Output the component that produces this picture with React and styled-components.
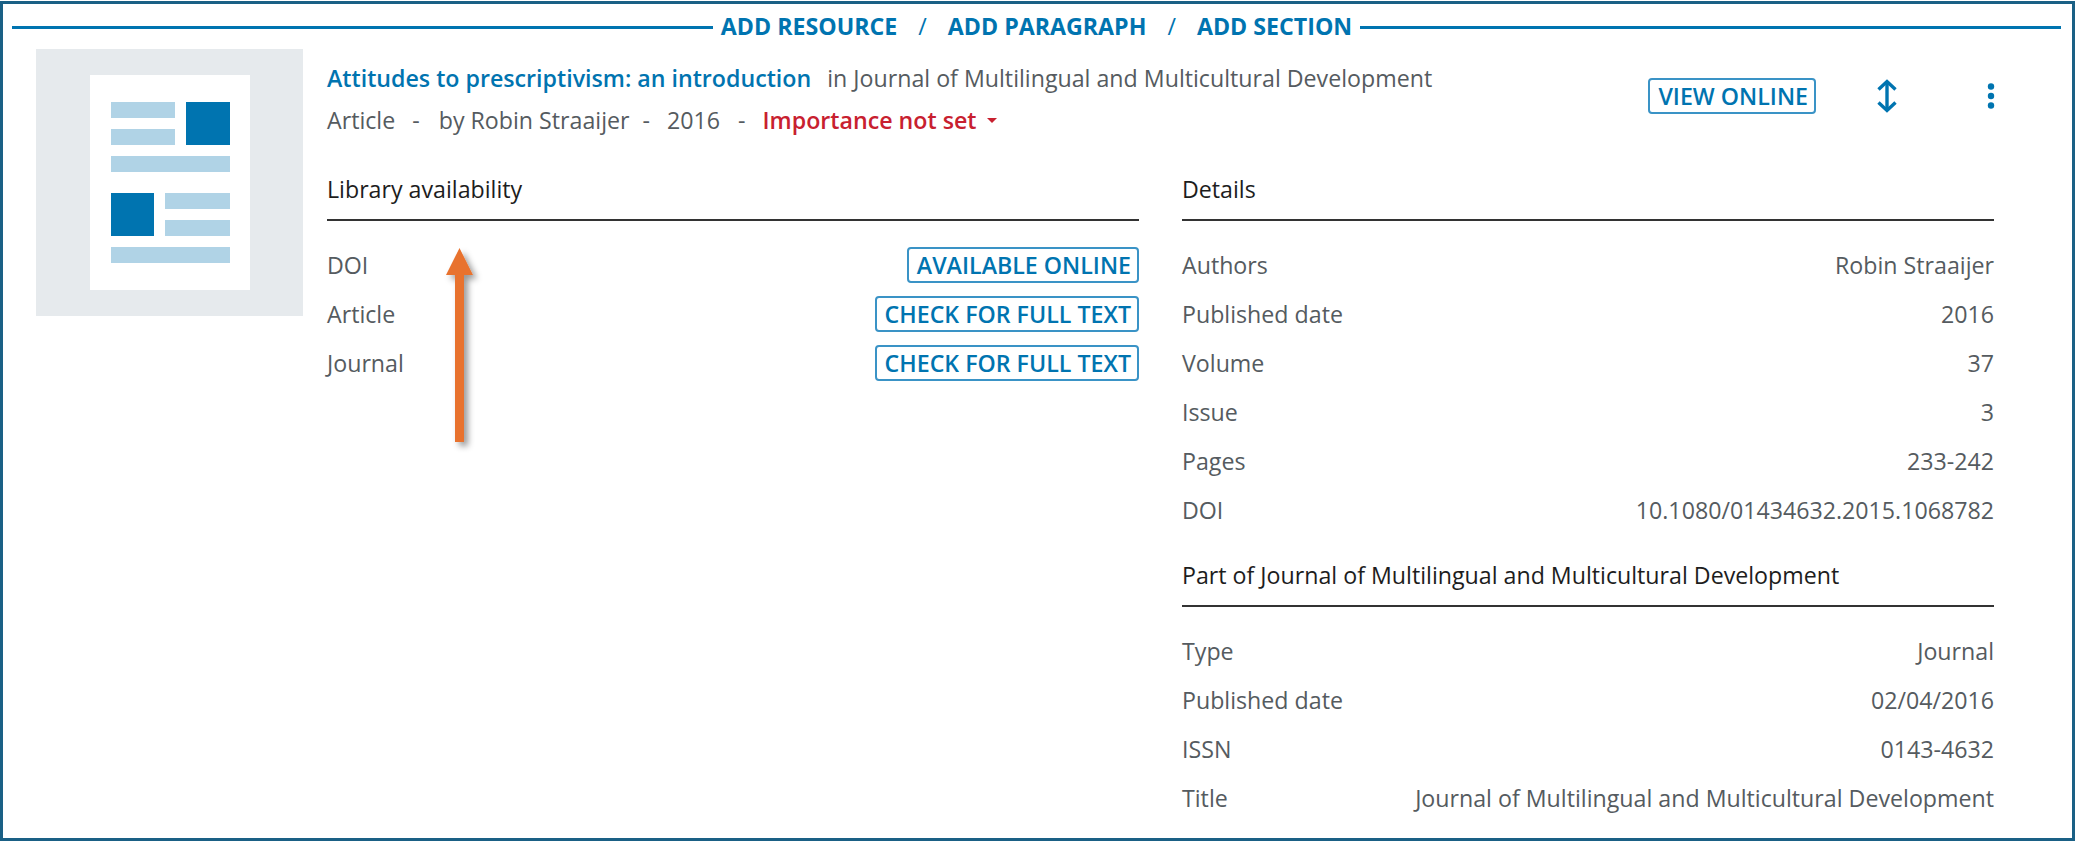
import React from 'react';
import styled, { createGlobalStyle } from 'styled-components';

const BLUE = '#0074b0';
const TEXT = '#555b60';

const DETAILS = [
  ['Authors', 'Robin Straaijer'],
  ['Published date', '2016'],
  ['Volume', '37'],
  ['Issue', '3'],
  ['Pages', '233-242'],
  ['DOI', '10.1080/01434632.2015.1068782'],
];

const JOURNAL = [
  ['Type', 'Journal'],
  ['Published date', '02/04/2016'],
  ['ISSN', '0143-4632'],
  ['Title', 'Journal of Multilingual and Multicultural Development'],
];

const AVAILABILITY = [
  ['DOI', 'AVAILABLE ONLINE'],
  ['Article', 'CHECK FOR FULL TEXT'],
  ['Journal', 'CHECK FOR FULL TEXT'],
];

const App = () => (
  <>
    <GlobalStyle />
    <Frame>
      <AddBar>
        <AddLinks>
          <span>ADD RESOURCE</span>
          <Slash>/</Slash>
          <span>ADD PARAGRAPH</span>
          <Slash>/</Slash>
          <span>ADD SECTION</span>
        </AddLinks>
      </AddBar>
      <Body>
        <Thumb>
          <svg width="160" height="215" viewBox="0 0 160 215">
            <rect width="160" height="215" fill="#fff" />
            <rect x="21" y="27" width="64" height="16" fill="#b0d3e6" />
            <rect x="21" y="54" width="64" height="16" fill="#b0d3e6" />
            <rect x="96" y="27" width="44" height="43" fill={BLUE} />
            <rect x="21" y="81" width="119" height="16" fill="#b0d3e6" />
            <rect x="21" y="118" width="43" height="43" fill={BLUE} />
            <rect x="75" y="118" width="65" height="16" fill="#b0d3e6" />
            <rect x="75" y="145" width="65" height="16" fill="#b0d3e6" />
            <rect x="21" y="172" width="119" height="16" fill="#b0d3e6" />
          </svg>
        </Thumb>
        <Main>
          <Head>
            <div>
              <TitleLine>
                <Title>Attitudes to prescriptivism: an introduction</Title>
                <Journal>in Journal of Multilingual and Multicultural Development</Journal>
              </TitleLine>
              <MetaLine>
                <span>Article</span>
                <Sep $before={17} $after={19}>-</Sep>
                <span>by Robin Straaijer</span>
                <Sep $before={13} $after={17}>-</Sep>
                <span>2016</span>
                <Sep $before={18} $after={17}>-</Sep>
                <Importance>
                  Importance not set
                  <Caret />
                </Importance>
              </MetaLine>
            </div>
            <Actions>
              <OutlineButton>VIEW ONLINE</OutlineButton>
              <svg width="24" height="34" viewBox="0 0 24 34" fill="none" stroke={BLUE} strokeWidth="3.4">
                <path d="M12 2.5V31.5" />
                <path d="M3.5 10.5L12 2.5L20.5 10.5" />
                <path d="M3.5 23.5L12 31.5L20.5 23.5" />
              </svg>
              <svg width="16" height="28" viewBox="0 0 16 28" fill={BLUE}>
                <circle cx="8" cy="4.5" r="3.2" />
                <circle cx="8" cy="14" r="3.2" />
                <circle cx="8" cy="23.5" r="3.2" />
              </svg>
            </Actions>
          </Head>
          <Columns>
            <Column>
              <SectionHead>Library availability</SectionHead>
              <Rows>
                {AVAILABILITY.map(([label, action], i) => (
                  <Row key={i}>
                    <span>{label}</span>
                    <OutlineButton>{action}</OutlineButton>
                  </Row>
                ))}
              </Rows>
            </Column>
            <Column>
              <SectionHead>Details</SectionHead>
              <Rows>
                {DETAILS.map(([label, value]) => (
                  <Row key={label}>
                    <span>{label}</span>
                    <span>{value}</span>
                  </Row>
                ))}
              </Rows>
              <SectionHead $spaced>Part of Journal of Multilingual and Multicultural Development</SectionHead>
              <Rows>
                {JOURNAL.map(([label, value]) => (
                  <Row key={label}>
                    <span>{label}</span>
                    <span>{value}</span>
                  </Row>
                ))}
              </Rows>
            </Column>
          </Columns>
        </Main>
      </Body>
      <Arrow width="40" height="215" viewBox="0 0 40 215">
        <defs>
          <filter id="arrowShadow" x="-50%" y="-10%" width="200%" height="120%">
            <feDropShadow dx="4" dy="4" stdDeviation="3" floodColor="#000" floodOpacity="0.4" />
          </filter>
        </defs>
        <path
          d="M13.5 1L27 28H18V195H9V28H0Z"
          fill="#e8722f"
          filter="url(#arrowShadow)"
        />
      </Arrow>
    </Frame>
  </>
);

const GlobalStyle = createGlobalStyle`
  html, body {
    margin: 0;
    background: #fff;
  }
  body {
    font-family: "Open Sans", "Liberation Sans", sans-serif;
    font-size: 23.2px;
    line-height: 30px;
    color: ${TEXT};
  }
`;

const Frame = styled.div`
  position: relative;
  box-sizing: border-box;
  width: 2075px;
  height: 840px;
  margin-top: 1px;
  border: 3px solid #1a6085;
  padding: 11px 11px 0 9px;
  overflow: hidden;
`;

const AddBar = styled.div`
  display: flex;
  align-items: center;
  height: 24px;
  &::before,
  &::after {
    content: '';
    flex: 1;
    height: 3px;
    background: ${BLUE};
  }
`;

const AddLinks = styled.div`
  display: flex;
  gap: 21px;
  padding: 0 8px 2px;
  font-weight: 700;
  line-height: 24px;
  color: ${BLUE};
`;

const Slash = styled.span`
  font-weight: 400;
`;

const Body = styled.div`
  display: flex;
  gap: 24px;
  margin-top: 10px;
  padding: 0 67px 0 24px;
`;

const Thumb = styled.div`
  flex: none;
  display: flex;
  align-items: center;
  justify-content: center;
  width: 267px;
  height: 267px;
  background: #e6eaed;
`;

const Main = styled.div`
  flex: 1;
  min-width: 0;
  padding-top: 14px;
`;

const Head = styled.div`
  display: flex;
  justify-content: space-between;
  align-items: flex-start;
`;

const TitleLine = styled.div`
  display: flex;
  gap: 16px;
`;

const Title = styled.span`
  font-weight: 600;
  color: ${BLUE};
`;

const Journal = styled.span`
  color: ${TEXT};
`;

const MetaLine = styled.div`
  display: flex;
  margin-top: 12px;
`;

const Sep = styled.span`
  margin: 0 ${(props) => props.$after}px 0 ${(props) => props.$before}px;
`;

const Importance = styled.span`
  display: inline-flex;
  align-items: center;
  gap: 11px;
  font-weight: 600;
  color: #c8202f;
`;

const Caret = styled.i`
  width: 0;
  height: 0;
  border-top: 5px solid #c8202f;
  border-left: 5px solid transparent;
  border-right: 5px solid transparent;
`;

const Actions = styled.div`
  display: flex;
  align-items: center;
  gap: 59px;
  height: 36px;
  margin: 15px -5px 0 0;
  svg:last-child {
    margin-left: 25px;
  }
`;

const OutlineButton = styled.span`
  display: inline-flex;
  align-items: center;
  box-sizing: border-box;
  height: 36px;
  padding: 0 6px 0 8px;
  border: 2px solid #3a93c6;
  border-radius: 4px;
  font-weight: 600;
  color: ${BLUE};
`;

const Columns = styled.div`
  display: grid;
  grid-template-columns: 812px 812px;
  column-gap: 43px;
  margin-top: 39px;
`;

const Column = styled.div`
  min-width: 0;
`;

const SectionHead = styled.div`
  margin-top: ${(props) => (props.$spaced ? '26px' : '0')};
  padding-bottom: 15px;
  border-bottom: 2px solid #333;
  color: #1d1d1d;
`;

const Rows = styled.div`
  margin-top: 19px;
`;

const Row = styled.div`
  display: flex;
  justify-content: space-between;
  align-items: center;
  height: 49px;
`;

const Arrow = styled.svg`
  position: absolute;
  left: 443px;
  top: 243px;
  overflow: visible;
`;

export default App;
